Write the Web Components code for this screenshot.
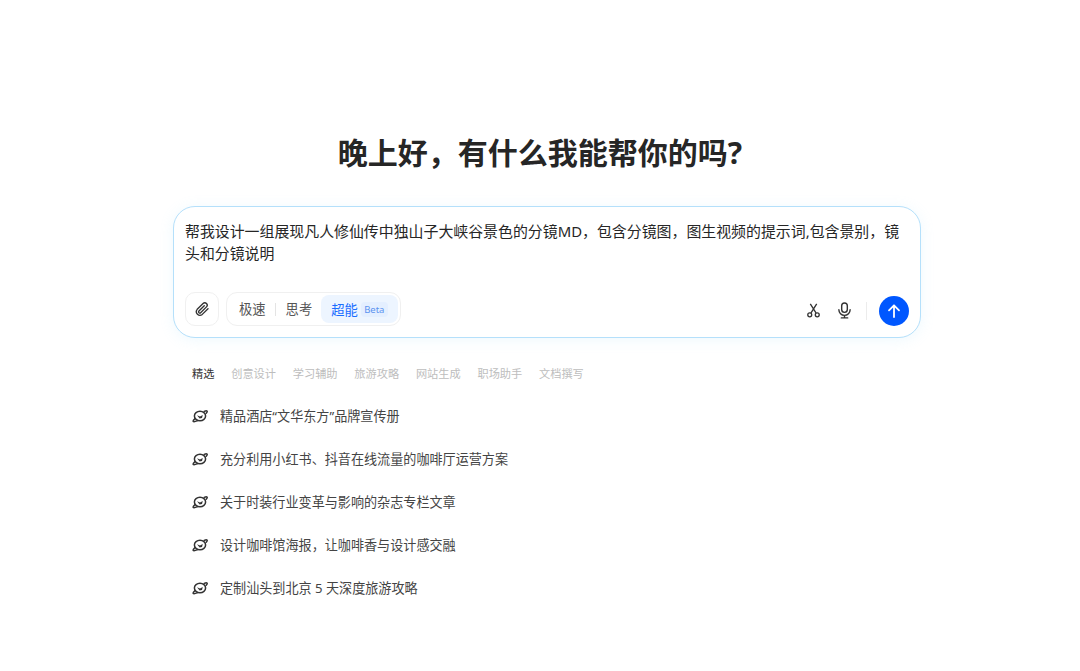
<!DOCTYPE html>
<html lang="zh">
<head>
<meta charset="utf-8">
<style>
html,body{margin:0;padding:0;background:#fff;height:100%;}
body{font-family:"Noto Sans","Noto Sans CJK SC",sans-serif;color:#262626;overflow:hidden;}
</style>
</head>
<body>
<home-page></home-page>
<script>
class HomePage extends HTMLElement{
    constructor(){
        super();
        this.attachShadow({mode:'open'});
        this.shadowRoot.innerHTML=`
        <style>
        :host{display:flex;flex-direction:column;align-items:center;padding-top:131px;}
        h1{margin:0 0 31px;font-size:30px;line-height:44px;font-weight:700;color:#262626;letter-spacing:0;}
        chat-box{margin-left:14px;}
        .below{width:748px;box-sizing:border-box;padding:0 0 0 19px;margin:26px 0 0 14px;}
        </style>
        <h1>晚上好，有什么我能帮你的吗?</h1>
        <chat-box>帮我设计一组展现凡人修仙传中独山子大峡谷景色的分镜MD，包含分镜图，图生视频的提示词,包含景别，镜头和分镜说明</chat-box>
        <div class="below">
            <tab-bar></tab-bar>
            <prompt-item>精品酒店“文华东方”品牌宣传册</prompt-item>
            <prompt-item>充分利用小红书、抖音在线流量的咖啡厅运营方案</prompt-item>
            <prompt-item>关于时装行业变革与影响的杂志专栏文章</prompt-item>
            <prompt-item>设计咖啡馆海报，让咖啡香与设计感交融</prompt-item>
            <prompt-item>定制汕头到北京 5 天深度旅游攻略</prompt-item>
        </div>`;
    }
}
class ChatBox extends HTMLElement{
    constructor(){
        super();
        this.attachShadow({mode:'open'});
        this.shadowRoot.innerHTML=`
        <style>
        :host{display:flex;flex-direction:column;justify-content:space-between;width:748px;height:132px;box-sizing:border-box;border:1px solid #b5e0fb;border-radius:22px;background:#fff;box-shadow:0 2px 14px rgba(150,215,250,.16);padding:13px 11px 11px;}
        .txt{font-size:14.92px;line-height:22px;color:#262626;}
        .bar{display:flex;align-items:center;}
        .clip{width:34px;height:34px;box-sizing:border-box;border:1px solid #f0f0f0;border-radius:10px;display:flex;align-items:center;justify-content:center;margin-right:7px;}
        .modes{height:34px;box-sizing:border-box;border:1px solid #f0f0f0;border-radius:11px;display:flex;align-items:center;padding:2px;font-size:13.3px;color:#555;}
        .m{padding:0 9px 0 10px;line-height:28px;}
        .sep{width:1px;height:13px;background:#e4e4e4;}
        .on{height:28px;border-radius:8px;background:#edf5ff;color:#1a6dff;display:flex;align-items:center;padding:0 10px 0 10px;font-size:13.3px;}
        .beta{font-size:9.5px;line-height:15px;height:15px;width:27px;text-align:center;margin-left:3px;border-radius:4px;background:#e4efff;color:#5b93f0;}
        .right{margin-left:auto;display:flex;align-items:center;padding-top:3px;}
        .ic{display:flex;width:20px;justify-content:center;}
        .div{width:1px;height:18px;background:#ececec;margin:0 12px 0 12px;}
        .send{width:30px;height:30px;border-radius:50%;background:#0057ff;display:flex;align-items:center;justify-content:center;}
        </style>
        <div class="txt"><slot></slot></div>
        <div class="bar">
            <div class="clip"><svg width="16" height="16" viewBox="0 0 24 24" fill="none" stroke="#333" stroke-width="2" stroke-linecap="round" stroke-linejoin="round"><path d="M21 11.5l-8.6 8.6a5.4 5.4 0 0 1-7.6-7.6l8.8-8.8a3.6 3.6 0 0 1 5.1 5.1l-8.7 8.7a1.8 1.8 0 0 1-2.6-2.5l8-8"/></svg></div>
            <div class="modes">
                <span class="m">极速</span><span class="sep"></span><span class="m">思考</span>
                <div class="on">超能<span class="beta">Beta</span></div>
            </div>
            <div class="right">
                <span class="ic"><svg width="15" height="15" viewBox="0 0 16 16" fill="none" stroke="#333" stroke-width="1.4"><circle cx="4" cy="12.6" r="2.1"/><circle cx="12" cy="12.6" r="2.1"/><path d="M5.2 10.8L11.4 1M10.8 10.8L4.6 1"/></svg></span>
                <span class="ic" style="margin-left:11px"><svg width="15" height="17" viewBox="0 0 16 18" fill="none" stroke="#333" stroke-width="1.5" stroke-linecap="round"><rect x="5" y="1" width="6" height="10" rx="3"/><path d="M2 8.2a6 6 0 0 0 12 0M8 14.2v2.6M4.6 16.9h6.8"/></svg></span>
                <span class="div"></span>
                <span class="send"><svg width="16" height="16" viewBox="0 0 16 16" fill="none" stroke="#fff" stroke-width="1.8" stroke-linecap="round" stroke-linejoin="round"><path d="M8 14V2.5M3 7.3L8 2.3l5 5"/></svg></span>
            </div>
        </div>`;
    }
}
class TabBar extends HTMLElement{
    constructor(){
        super();
        this.attachShadow({mode:'open'});
        const tabs=['精选','创意设计','学习辅助','旅游攻略','网站生成','职场助手','文档撰写'];
        this.shadowRoot.innerHTML=`
        <style>
        :host{display:flex;gap:16.8px;font-size:11.2px;line-height:20px;color:#bdbdbd;height:20px;margin-bottom:10px;}
        .a{color:#333;}
        </style>
        ${tabs.map((t,i)=>`<span class="${i==0?'a':''}">${t}</span>`).join('')}`;
    }
}
class PromptItem extends HTMLElement{
    constructor(){
        super();
        this.attachShadow({mode:'open'});
        this.shadowRoot.innerHTML=`
        <style>
        :host{display:flex;align-items:center;height:43px;font-size:13.1px;color:#444;}
        svg{margin-right:12px;flex:none;}
        </style>
        <svg width="16" height="14" viewBox="0 0 16 14" fill="none" stroke="#333" stroke-width="1.5"><ellipse cx="8" cy="7" rx="5.6" ry="4.8"/><path d="M3 9.6C1.6 10.8.8 11.8 1.2 12.4c.6.6 2.6 0 4.4-.8M14.2 4.2c1-1 1.2-1.8.8-2.2-.4-.4-1.4-.2-2.8.4" stroke-linecap="round"/><path d="M5 6.2l3 1.2 2.8-1.4-.8 3-2.4.6z" fill="#333" stroke="none"/></svg>
        <span><slot></slot></span>`;
    }
}
customElements.define('chat-box',ChatBox);
customElements.define('tab-bar',TabBar);
customElements.define('prompt-item',PromptItem);
customElements.define('home-page',HomePage);
</script>
</body>
</html>
